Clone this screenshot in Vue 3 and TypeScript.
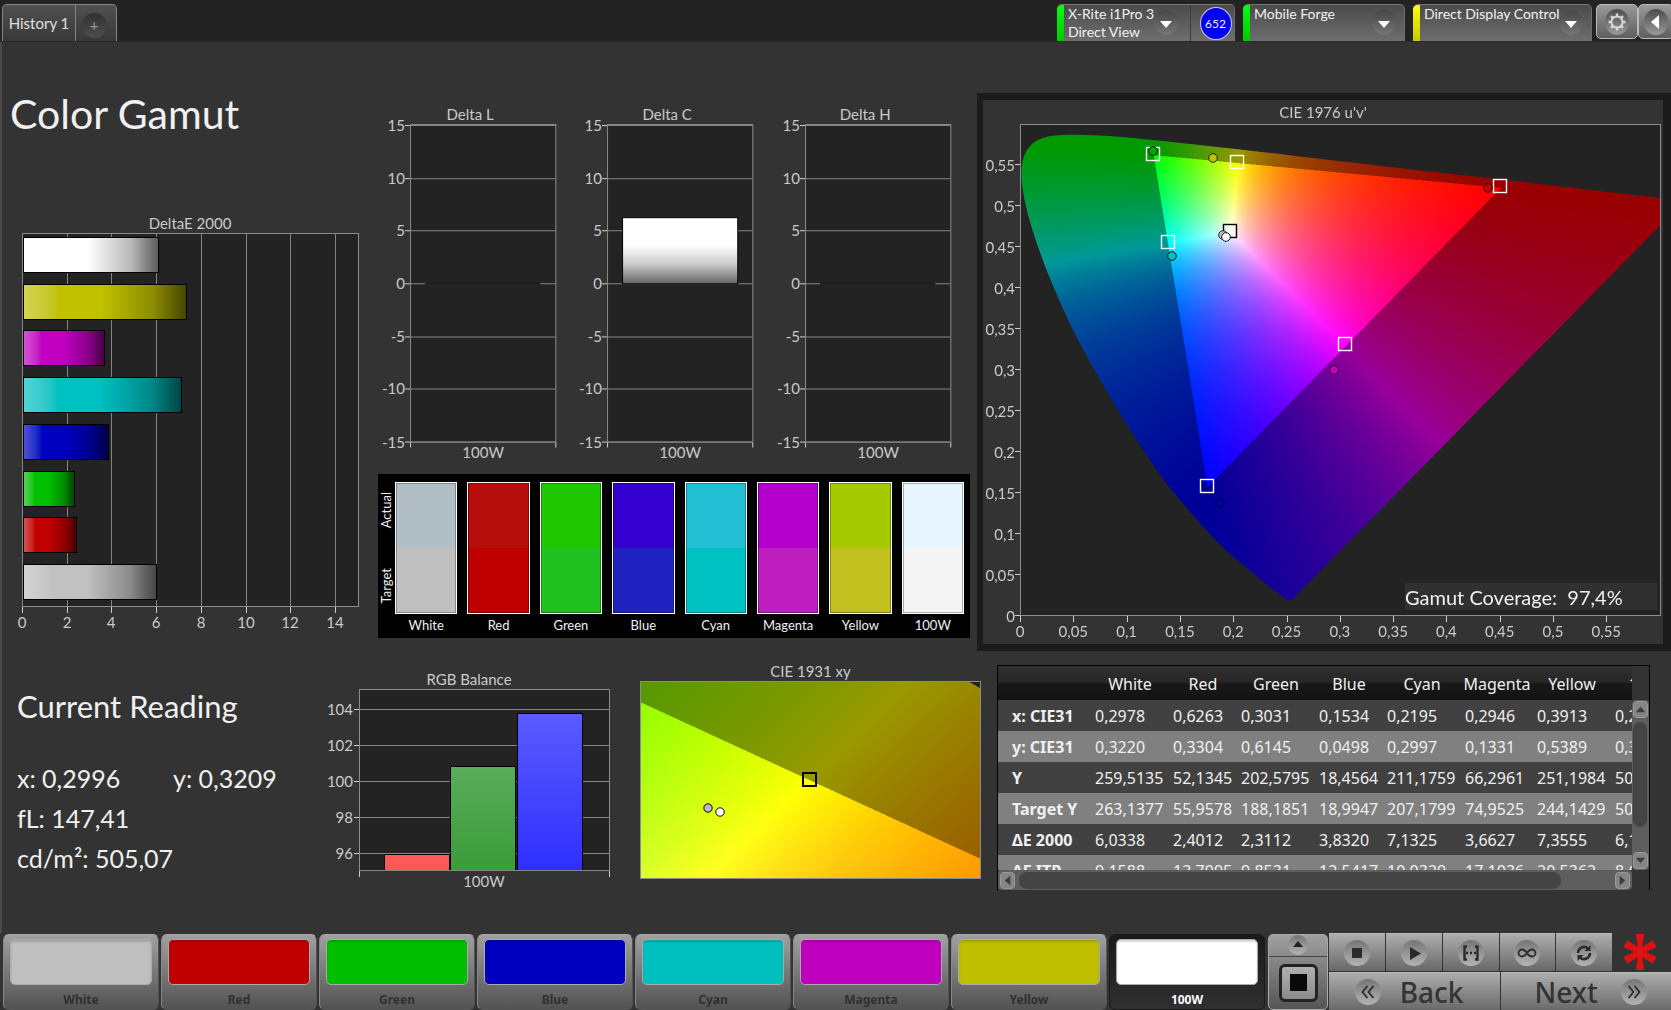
<script setup lang="ts">
import { onMounted, ref } from 'vue'

type Pt = [number, number]
interface Marker { x: number; y: number; fill?: string; stroke: string }

const hueBars = [
  { name: '100W', value: 6.1, color: '#ffffff' },
  { name: 'Yellow', value: 7.3555, color: '#c1c100' },
  { name: 'Magenta', value: 3.6627, color: '#c100c1' },
  { name: 'Cyan', value: 7.1325, color: '#00c1c1' },
  { name: 'Blue', value: 3.832, color: '#0000c1' },
  { name: 'Green', value: 2.3112, color: '#00c100' },
  { name: 'Red', value: 2.4012, color: '#c10000' },
  { name: 'White', value: 6, color: '#c1c1c1' },
]
const deX = (v: number) => Math.round(22 + v * 22.35)
const deTicks = [0, 2, 4, 6, 8, 10, 12, 14]

const deltaCharts = [
  { title: 'Delta L', value: 0 },
  { title: 'Delta C', value: 6.3 },
  { title: 'Delta H', value: 0 },
]
const deltaTicks = [15, 10, 5, 0, -5, -10, -15]
const deltaY = (v: number) => Math.round(184 - v * 10.54)

const swatches = [
  { name: 'White', actual: '#b1bec5', target: '#bfbfbf' },
  { name: 'Red', actual: '#b50e0c', target: '#be0000' },
  { name: 'Green', actual: '#1fc700', target: '#22c122' },
  { name: 'Blue', actual: '#3300cf', target: '#2222c0' },
  { name: 'Cyan', actual: '#22bed3', target: '#00c1c1' },
  { name: 'Magenta', actual: '#b300cb', target: '#bf1fbf' },
  { name: 'Yellow', actual: '#a6ca00', target: '#c1c11f' },
  { name: '100W', actual: '#e8f7ff', target: '#f4f4f4' },
]

const balanceTicks = [104, 102, 100, 98, 96]
const balanceY = (v: number) => Math.round(131 - (v - 100) * 18.1)
const balanceBars = [
  { x: 52, top: 204, from: '#ff5b5b', to: '#ff5555' },
  { x: 118, top: 116, from: '#5aac5a', to: '#3a9c3a' },
  { x: 185, top: 63, from: '#5b5bff', to: '#2f2fff' },
]

const uTicks = [0, 0.05, 0.1, 0.15, 0.2, 0.25, 0.3, 0.35, 0.4, 0.45, 0.5, 0.55]
const comma = (v: number) => String(v).replace('.', ',')
const uX = (u: number) => 37 + u * 1066
const vY = (v: number) => 516 - v * 820

const uvTargets: Marker[] = [
  { x: 170, y: 54, stroke: '#fff' },
  { x: 254, y: 62, stroke: '#fff' },
  { x: 517, y: 86, stroke: '#fff' },
  { x: 185, y: 142, stroke: '#fff' },
  { x: 362, y: 244, stroke: '#fff' },
  { x: 224, y: 386, stroke: '#fff' },
  { x: 247, y: 131, stroke: '#000' },
]
const uvReadings: Marker[] = [
  { x: 170, y: 51, fill: '#00a800', stroke: '#002000' },
  { x: 230, y: 58, fill: '#c1c100', stroke: '#222' },
  { x: 505, y: 88, fill: '#c10000', stroke: '#300' },
  { x: 189, y: 156, fill: '#00c1c1', stroke: '#012' },
  { x: 351, y: 270, fill: '#c100c1', stroke: '#303' },
  { x: 237, y: 403, fill: '#0000a4', stroke: '#000030' },
  { x: 240, y: 135, fill: '#c1c1c1', stroke: '#222' },
  { x: 243, y: 137, fill: '#fff', stroke: '#111' },
]

// Spectral locus, CIE 1931 xy
const locus: Pt[] = [
  [0.1736, 0.0059], [0.1712, 0.0061], [0.1644, 0.0109], [0.1566, 0.0177], [0.144, 0.0297],
  [0.1241, 0.0578], [0.1096, 0.0868], [0.0913, 0.1327], [0.0687, 0.2007], [0.0454, 0.295],
  [0.0235, 0.4127], [0.0082, 0.5384], [0.0039, 0.6548], [0.0139, 0.7502], [0.0389, 0.812],
  [0.0743, 0.8338], [0.1142, 0.8262], [0.1547, 0.8059], [0.2296, 0.7543], [0.3016, 0.6923],
  [0.3731, 0.6245], [0.4441, 0.5547], [0.5125, 0.4866], [0.5752, 0.4242], [0.627, 0.3725],
  [0.6658, 0.334], [0.6915, 0.3083], [0.719, 0.2809], [0.7347, 0.2653],
]

// Full brightness inside the Rec.709 triangle, dimmed outside it
function chromaticityColor(x: number, y: number): number[] {
  const X = x / y
  const Z = (1 - x - y) / y
  const rgb = [
    3.2406 * X - 1.5372 - 0.4986 * Z,
    -0.9689 * X + 1.8758 + 0.0415 * Z,
    0.0557 * X - 0.204 + 1.057 * Z,
  ]
  const inside = Math.min(...rgb) >= -0.0005
  const max = Math.max(...rgb)
  const level = inside ? 255 : 153
  return rgb.map((c) => (Math.max(0, c) / max) * level)
}

const samples: Pt[] = [[-0.25, -0.25], [0.25, -0.25], [-0.25, 0.25], [0.25, 0.25]]

function paintDiagram(
  canvas: HTMLCanvasElement,
  plot: { x: number; y: number; w: number; h: number },
  toXy: (px: number, py: number) => Pt,
  fromXy: (p: Pt) => Pt,
) {
  const ctx = canvas.getContext('2d')
  const layer = document.createElement('canvas')
  layer.width = plot.w
  layer.height = plot.h
  const layerCtx = layer.getContext('2d')
  if (!ctx || !layerCtx) return
  const img = layerCtx.createImageData(plot.w, plot.h)
  for (let j = 0; j < plot.h; j++) {
    for (let i = 0; i < plot.w; i++) {
      const k = (j * plot.w + i) * 4
      const sum = [0, 0, 0]
      for (const [dx, dy] of samples) {
        const [x, y] = toXy(plot.x + i + dx, plot.y + j + dy)
        const c = chromaticityColor(x, Math.max(y, 0.0001))
        for (let n = 0; n < 3; n++) sum[n] += c[n] / 4
      }
      img.data[k] = sum[0]
      img.data[k + 1] = sum[1]
      img.data[k + 2] = sum[2]
      img.data[k + 3] = 255
    }
  }
  layerCtx.putImageData(img, 0, 0)

  ctx.fillStyle = '#232323'
  ctx.fillRect(plot.x, plot.y, plot.w, plot.h)
  const p = locus.map(fromXy)
  ctx.save()
  ctx.beginPath()
  ctx.moveTo(p[0][0], p[0][1])
  for (let i = 0; i < p.length - 1; i++) {
    const a = p[Math.max(0, i - 1)]
    const b = p[i]
    const c = p[i + 1]
    const d = p[Math.min(p.length - 1, i + 2)]
    ctx.bezierCurveTo(
      b[0] + (c[0] - a[0]) / 6, b[1] + (c[1] - a[1]) / 6,
      c[0] - (d[0] - b[0]) / 6, c[1] - (d[1] - b[1]) / 6,
      c[0], c[1],
    )
  }
  ctx.closePath()
  ctx.clip()
  ctx.drawImage(layer, plot.x, plot.y)
  ctx.restore()
}

const uvCanvas = ref<HTMLCanvasElement | null>(null)
const xyCanvas = ref<HTMLCanvasElement | null>(null)

onMounted(() => {
  if (uvCanvas.value) {
    paintDiagram(
      uvCanvas.value,
      { x: 37, y: 24, w: 640, h: 492 },
      (px, py) => {
        const u = (px - 37) / 1066
        const v = (516 - py) / 820
        const d = 6 * u - 16 * v + 12
        return [(9 * u) / d, (4 * v) / d]
      },
      ([x, y]) => {
        const d = -2 * x + 12 * y + 3
        return [uX((4 * x) / d), vY((9 * y) / d)]
      },
    )
  }
  if (xyCanvas.value) {
    paintDiagram(
      xyCanvas.value,
      { x: 0, y: 0, w: 341, h: 198 },
      (px, py) => [0.4193 + (px - 169) / 4434, 0.5053 - (py - 99) / 2570],
      ([x, y]) => [169 + (x - 0.4193) * 4434, 99 - (y - 0.5053) * 2570],
    )
  }
})

const columns = ['White', 'Red', 'Green', 'Blue', 'Cyan', 'Magenta', 'Yellow', '100W']
const rows = [
  { name: 'x: CIE31', cells: ['0,2978', '0,6263', '0,3031', '0,1534', '0,2195', '0,2946', '0,3913', '0,2996'] },
  { name: 'y: CIE31', cells: ['0,3220', '0,3304', '0,6145', '0,0498', '0,2997', '0,1331', '0,5389', '0,3209'] },
  { name: 'Y', cells: ['259,5135', '52,1345', '202,5795', '18,4564', '211,1759', '66,2961', '251,1984', '505,0700'] },
  { name: 'Target Y', cells: ['263,1377', '55,9578', '188,1851', '18,9947', '207,1799', '74,9525', '244,1429', '505,0700'] },
  { name: 'ΔE 2000', cells: ['6,0338', '2,4012', '2,3112', '3,8320', '7,1325', '3,6627', '7,3555', '6,1000'] },
  { name: 'ΔE ITP', cells: ['9,1588', '13,7995', '9,8531', '12,5417', '10,0329', '17,1036', '20,5362', '8,6000'] },
]

const patterns = [
  { name: 'White', color: '#bfbfbf' },
  { name: 'Red', color: '#bf0000' },
  { name: 'Green', color: '#00bf00' },
  { name: 'Blue', color: '#0000bf' },
  { name: 'Cyan', color: '#00bfbf' },
  { name: 'Magenta', color: '#bf00bf' },
  { name: 'Yellow', color: '#bfbf00' },
  { name: '100W', color: '#ffffff' },
]
const selected = ref('100W')
</script>

<template>
  <div class="app">
    <header class="topbar">
      <nav class="tabs" aria-label="History">
        <button type="button" class="tab">History 1</button>
        <button type="button" class="tab tab-add" aria-label="Add history"><span class="round">+</span></button>
      </nav>
      <div class="devices">
        <div class="device">
          <i class="stripe green"></i>
          <label class="device-text meter">
            <select aria-label="Meter"><option>X-Rite i1Pro 3</option></select>
            <span>Direct View</span>
          </label>
          <span class="round chevron"><svg viewBox="0 0 24 26"><path d="M6 11h12l-6 7z" fill="#fff" /></svg></span>
          <span class="count-cell"><span class="count">652</span></span>
        </div>
        <div class="device">
          <i class="stripe green"></i>
          <label class="device-text source"><select aria-label="Source"><option>Mobile Forge</option></select></label>
          <span class="round chevron"><svg viewBox="0 0 24 26"><path d="M6 11h12l-6 7z" fill="#fff" /></svg></span>
        </div>
        <div class="device">
          <i class="stripe yellow"></i>
          <label class="device-text display"><select aria-label="Display"><option>Direct Display Control</option></select></label>
          <span class="round chevron"><svg viewBox="0 0 24 26"><path d="M6 11h12l-6 7z" fill="#fff" /></svg></span>
        </div>
        <div class="corner">
          <button type="button" class="corner-btn" aria-label="Settings">
            <svg viewBox="0 0 26 26">
              <ellipse cx="13" cy="13" rx="12" ry="13" fill="url(#knob)" />
              <g stroke="#d8d8d8" fill="none">
                <circle cx="13" cy="13" r="5.6" stroke-width="2" />
                <path stroke-width="2.4" d="M13 4.5v2.6M13 18.9v2.6M4.5 13h2.6M18.9 13h2.6M7 7l1.8 1.8M17.2 17.2L19 19M19 7l-1.8 1.8M8.8 17.2L7 19" />
              </g>
            </svg>
          </button>
          <button type="button" class="corner-btn" aria-label="Collapse">
            <svg viewBox="0 0 26 26">
              <ellipse cx="13" cy="13" rx="12" ry="13" fill="url(#knob)" />
              <path d="M16 6v14l-8-7z" fill="#fff" />
            </svg>
          </button>
        </div>
      </div>
      <svg class="defs" width="0" height="0" aria-hidden="true">
        <defs>
          <linearGradient id="knob" x1="0" y1="0" x2="0" y2="1">
            <stop offset="0" stop-color="#4c4c4c" /><stop offset="1" stop-color="#9a9a9a" />
          </linearGradient>
          <linearGradient id="knobLight" x1="0" y1="0" x2="0" y2="1">
            <stop offset="0" stop-color="#757575" /><stop offset="1" stop-color="#b4b4b4" />
          </linearGradient>
        </defs>
      </svg>
    </header>

    <main>
      <section class="upper">
        <div class="col-left">
          <h1>Color Gamut</h1>
          <svg class="chart" viewBox="2 0 376 430" role="img" aria-label="DeltaE 2000">
            <defs>
              <linearGradient v-for="b in hueBars" :id="'de' + b.name" :key="b.name">
                <stop offset="0" :stop-color="`color-mix(in srgb, ${b.color} 68%, white)`" />
                <stop offset="0.22" :stop-color="b.color" />
                <stop offset="0.48" :stop-color="b.color" />
                <stop offset="0.8" :stop-color="`color-mix(in srgb, ${b.color} 72%, black)`" />
                <stop offset="1" :stop-color="`color-mix(in srgb, ${b.color} 36%, black)`" />
              </linearGradient>
            </defs>
            <text x="190" y="19" class="mid">DeltaE 2000</text>
            <rect x="22.5" y="23.5" width="336" height="373" class="plot" />
            <g v-for="t in deTicks" :key="t">
              <path :d="`M${deX(t) + 0.5} 23V396`" class="grid" />
              <path :d="`M${deX(t) + 0.5} 397v6`" class="tick" />
              <text :x="deX(t)" y="418" class="mid">{{ t }}</text>
            </g>
            <rect
              v-for="(b, i) in hueBars" :key="b.name" x="23.5" :y="27.5 + Math.round(i * 46.7)"
              :width="deX(b.value) - 23" height="35" :fill="`url(#de${b.name})`" stroke="#000"
            />
          </svg>
        </div>

        <div class="col-mid">
          <div class="deltas">
            <svg v-for="c in deltaCharts" :key="c.title" class="chart" viewBox="0 0 197 373" role="img" :aria-label="c.title">
              <defs>
                <linearGradient id="white-bar" x1="0" y1="0" x2="0" y2="1">
                  <stop offset="0.42" stop-color="#fff" /><stop offset="0.7" stop-color="#ccc" /><stop offset="1" stop-color="#666" />
                </linearGradient>
              </defs>
              <text x="92" y="20" class="mid">{{ c.title }}</text>
              <rect x="32.5" y="24.5" width="145" height="317" class="plot" />
              <g v-for="t in deltaTicks" :key="t">
                <path :d="`M32 ${deltaY(t) - 0.5}h145`" class="grid" />
                <path :d="`M27 ${deltaY(t) - 0.5}h5`" class="tick" />
                <text x="27" :y="deltaY(t) + 5" class="end">{{ t }}</text>
              </g>
              <path d="M32.5 342v5M177.5 342v5" class="tick" />
              <rect
                v-if="c.value" x="47.5" :y="deltaY(c.value) - 0.5" width="115" :height="184 - deltaY(c.value)"
                fill="url(#white-bar)" stroke="#000"
              />
              <path v-else d="M47 183.5h115" stroke="#1b1b1b" stroke-width="2" />
              <text x="105" y="357" class="mid">100W</text>
            </svg>
          </div>
          <div class="swatch-panel">
            <div class="side"><span>Actual</span><span>Target</span></div>
            <div class="swatches">
              <figure v-for="s in swatches" :key="s.name">
                <div class="swatch">
                  <i :style="{ background: s.actual }"></i>
                  <i :style="{ background: s.target }"></i>
                </div>
                <figcaption>{{ s.name }}</figcaption>
              </figure>
            </div>
          </div>
        </div>

        <div class="gamut-panel">
          <div class="stack">
            <canvas ref="uvCanvas" width="680" height="544"></canvas>
            <svg class="chart" viewBox="0 0 680 544" role="img" aria-label="CIE 1976 u'v'">
              <text x="340" y="18" class="mid">CIE 1976 u'v'</text>
              <rect x="37.5" y="24.5" width="640" height="491" class="frame" />
              <g v-for="t in uTicks" :key="t">
                <path :d="`M${Math.round(uX(t)) + 0.5} 516v6`" class="tick" />
                <text :x="uX(t)" y="537" class="mid">{{ comma(t) }}</text>
                <path :d="`M32 ${Math.round(vY(t)) - 0.5}h5`" class="tick" />
                <text x="32" :y="Math.round(vY(t)) + 6" class="end">{{ comma(t) }}</text>
              </g>
              <rect v-for="(m, i) in uvTargets" :key="'t' + i" :x="m.x - 6.5" :y="m.y - 6.5" width="13" height="13" fill="none" :stroke="m.stroke" stroke-width="1.4" />
              <circle v-for="(m, i) in uvReadings" :key="'r' + i" :cx="m.x" :cy="m.y" r="4.3" :fill="m.fill" :stroke="m.stroke" />
              <rect x="422" y="483" width="252" height="27" fill="#303030" />
              <text x="422" y="505" class="coverage">Gamut Coverage:&nbsp; 97,4%</text>
            </svg>
          </div>
        </div>
      </section>

      <section class="lower">
        <div class="reading">
          <h2>Current Reading</h2>
          <p><span class="first">x: 0,2996</span><span>y: 0,3209</span></p>
          <p>fL: 147,41</p>
          <p>cd/m²: 505,07</p>
        </div>

        <svg class="chart" viewBox="0 0 292 240" role="img" aria-label="RGB Balance">
          <defs>
            <linearGradient v-for="(b, i) in balanceBars" :id="'rgb' + i" :key="i" x1="0" y1="0" x2="0" y2="1">
              <stop offset="0" :stop-color="b.from" /><stop offset="1" :stop-color="b.to" />
            </linearGradient>
          </defs>
          <text x="137" y="34" class="mid">RGB Balance</text>
          <rect x="27.5" y="38.5" width="250" height="181" class="plot" />
          <g v-for="t in balanceTicks" :key="t">
            <path :d="`M27 ${balanceY(t) - 0.5}h250`" class="grid" />
            <path :d="`M22 ${balanceY(t) - 0.5}h5`" class="tick" />
            <text x="21" :y="balanceY(t) + 5" class="end">{{ t }}</text>
          </g>
          <rect v-for="(b, i) in balanceBars" :key="i" :x="b.x + 0.5" :y="b.top - 0.5" width="65" :height="220 - b.top" :fill="`url(#rgb${i})`" stroke="#000" />
          <path d="M27 219.5h251" class="edge" />
          <path d="M27.5 220v6M277.5 220v6" class="tick" />
          <text x="152" y="236" class="mid">100W</text>
        </svg>

        <figure class="xy">
          <figcaption>CIE 1931 xy</figcaption>
          <div class="stack">
            <canvas ref="xyCanvas" width="341" height="198"></canvas>
            <svg class="chart" viewBox="0 0 341 198" role="img" aria-label="CIE 1931 xy">
              <rect x="0.5" y="0.5" width="340" height="197" class="frame" />
              <rect x="163" y="92" width="13" height="13" fill="none" stroke="#000" stroke-width="2" />
              <circle cx="68" cy="127" r="4.2" fill="#bbb" stroke="#000" />
              <circle cx="80" cy="131" r="4.2" fill="#fff" stroke="#000" />
            </svg>
          </div>
        </figure>

        <div class="grid-box">
          <div class="grid-view">
            <table>
              <colgroup>
                <col class="c-name"><col class="c-w"><col class="c-n"><col class="c-w"><col class="c-n">
                <col class="c-w"><col class="c-m"><col class="c-w"><col class="c-w">
              </colgroup>
              <thead>
                <tr><th></th><th v-for="c in columns" :key="c" scope="col">{{ c }}</th></tr>
              </thead>
              <tbody>
                <tr v-for="r in rows" :key="r.name">
                  <th scope="row">{{ r.name }}</th>
                  <td v-for="(v, i) in r.cells" :key="i">{{ v }}</td>
                </tr>
              </tbody>
            </table>
          </div>
          <div class="vbar">
            <button type="button" aria-label="Scroll up"><svg viewBox="0 0 14 16"><path d="M2 11h10L7 5z" /></svg></button>
            <i class="vthumb"></i>
            <button type="button" aria-label="Scroll down"><svg viewBox="0 0 14 16"><path d="M2 5h10l-5 6z" /></svg></button>
          </div>
          <div class="hbar">
            <button type="button" aria-label="Scroll left"><svg viewBox="0 0 14 16"><path d="M10 3v10L4 8z" /></svg></button>
            <i class="hthumb"></i>
            <button type="button" aria-label="Scroll right"><svg viewBox="0 0 14 16"><path d="M4 3v10l6-5z" /></svg></button>
          </div>
        </div>
      </section>
    </main>

    <footer>
      <div class="patterns">
        <button v-for="p in patterns" :key="p.name" type="button" class="pattern" :class="{ on: selected === p.name }" @click="selected = p.name">
          <i :style="{ background: p.color }"></i>
          <span>{{ p.name }}</span>
        </button>
      </div>
      <div class="window-ctl">
        <button type="button" class="up" aria-label="Expand">
          <svg width="20" height="20" viewBox="0 0 20 20"><circle cx="10" cy="10" r="10" fill="url(#knobLight)" /><path d="M5 12h10l-5-6z" fill="#222" /></svg>
        </button>
        <button type="button" class="full" aria-label="Pattern window"><i></i></button>
      </div>
      <div class="transport">
        <div class="row">
          <button type="button" aria-label="Stop"><svg viewBox="0 0 26 26"><circle cx="13" cy="13" r="13" fill="url(#knobLight)" /><path d="M8 8h10v10H8z" fill="#2b2b2b" /></svg></button>
          <button type="button" aria-label="Play"><svg viewBox="0 0 26 26"><circle cx="13" cy="13" r="13" fill="url(#knobLight)" /><path d="M9 7v13l11-6.500z" fill="#2b2b2b" /></svg></button>
          <button type="button" aria-label="Read series"><svg viewBox="0 0 26 26"><circle cx="13" cy="13" r="13" fill="url(#knobLight)" /><path d="M9 6.500H6.500v13H9M17 6.500h2.500v13H17M8 13h2M12 13h2M16 13h2" fill="none" stroke="#2b2b2b" stroke-width="2.400" /></svg></button>
          <button type="button" aria-label="Continuous"><svg viewBox="0 0 26 26"><circle cx="13" cy="13" r="13" fill="url(#knobLight)" /><path d="M13 13c-2-3-3.500-3.500-5-3.500a3.500 3.500 0 0 0 0 7c1.500 0 3-.5 5-3.500s3.500-3.500 5-3.500a3.500 3.500 0 0 1 0 7c-1.500 0-3-.5-5-3.500z" fill="none" stroke="#2b2b2b" stroke-width="1.800" /></svg></button>
          <button type="button" aria-label="Refresh"><svg viewBox="0 0 26 26"><circle cx="13" cy="13" r="13" fill="url(#knobLight)" /><path d="M7 13a6 6 0 0 1 10-4.500M19 13a6 6 0 0 1-10 4.500" fill="none" stroke="#2b2b2b" stroke-width="2.500" /><path d="M19.500 5v6h-6zM6.500 21v-6h6z" fill="#2b2b2b" /></svg></button>
          <span class="star">
            <svg width="34" height="38" viewBox="0 0 34 38">
              <path d="M13 1h8l-1.500 13 10-6.500 4 6.500-11 5 11 5-4 6.500-10-6.500L21 37h-8l1.500-13-10 6.500-4-6.500 11-5-11-5 4-6.500 10 6.500z" fill="#e01010" />
            </svg>
          </span>
        </div>
        <div class="row steps">
          <button type="button" class="step">
            <svg viewBox="0 0 26 26"><circle cx="13" cy="13" r="13" fill="url(#knobLight)" /><path d="M12.500 7l-5 6 5 6M18.500 7l-5 6 5 6" fill="none" stroke="#2b2b2b" stroke-width="1.800" /></svg>
            <span>Back</span>
          </button>
          <button type="button" class="step">
            <span>Next</span>
            <svg viewBox="0 0 26 26"><circle cx="13" cy="13" r="13" fill="url(#knobLight)" /><path d="M7.500 7l5 6-5 6M13.500 7l5 6-5 6" fill="none" stroke="#2b2b2b" stroke-width="1.800" /></svg>
          </button>
        </div>
      </div>
    </footer>
  </div>
</template>

<style>
body {
  background: #333;
}
</style>

<style scoped>
* {
  box-sizing: border-box;
}
.app {
  display: flex;
  flex-direction: column;
  min-height: 100vh;
  overflow: hidden;
  background: #333;
  color: #f0f0f0;
  font-family: Lato, "Noto Sans", sans-serif;
  font-size: 15px;
}
button,
select {
  margin: 0;
  padding: 0;
  border: 0;
  background: none;
  color: inherit;
  font: inherit;
}
figure,
h1,
h2,
p {
  margin: 0;
}
i {
  display: block;
}
.defs {
  position: absolute;
}

/* top bar */
.topbar {
  display: flex;
  justify-content: space-between;
  height: 42px;
  padding-top: 4px;
  background: #232323;
  border-bottom: 1px solid #2a2a2a;
}
.tabs {
  display: flex;
  margin-left: 2px;
  border: 1px solid #858585;
  border-bottom: 0;
  border-radius: 5px 5px 0 0;
  background: linear-gradient(#505050, #383838);
}
.tab {
  width: 72px;
  color: #e0e0e0;
}
.tab-add {
  display: flex;
  align-items: center;
  justify-content: center;
  width: 41px;
  padding-top: 4px;
  border-left: 1px solid #858585;
}
.round {
  display: flex;
  align-items: center;
  justify-content: center;
  width: 25px;
  height: 25px;
  border-radius: 50%;
  background: linear-gradient(#303030, #4e4e4e);
  color: #999;
}
.tab-add .round {
  margin-right: 4px;
}
.devices {
  display: flex;
  gap: 8px;
}
.device {
  display: flex;
  overflow: hidden;
  border-top: 1px solid #777;
  border-right: 1px solid #6c6c6c;
  border-radius: 5px 5px 0 0;
  background: linear-gradient(#4b4b4b, #6e6e6e);
}
.stripe {
  width: 7px;
}
.stripe.green {
  background: linear-gradient(#00ff12, #00c800);
}
.stripe.yellow {
  background: linear-gradient(#ffff00, #c8c800);
}
.device-text {
  display: flex;
  flex-direction: column;
  padding-left: 4px;
  color: #f2f2f2;
  font-size: 14px;
  line-height: 19px;
}
.device-text select {
  width: 100%;
  height: 17px;
  appearance: none;
  line-height: 17px;
}
.meter {
  width: 90px;
}
.source {
  width: 122px;
}
.display {
  width: 139px;
}
.chevron {
  flex: none;
  width: 24px;
  margin: 5px 8px 0 0;
  background: linear-gradient(#464646, #777);
}
.count-cell {
  display: flex;
  align-items: center;
  justify-content: center;
  width: 44px;
  margin-left: 4px;
  padding-left: 6px;
  border-left: 1px solid #3c3c3c;
}
.count {
  display: flex;
  align-items: center;
  justify-content: center;
  width: 32px;
  height: 33px;
  border: 1px solid #ccd;
  border-radius: 50%;
  background: #0000f5;
  font-size: 12px;
}
.corner {
  display: flex;
  width: 75px;
  margin-left: -4px;
  overflow: hidden;
}
.corner-btn {
  display: flex;
  align-items: center;
  justify-content: center;
  flex: none;
  width: 42px;
  height: 35px;
  border: 1px solid #bbb;
  border-radius: 5px;
  background: linear-gradient(#999, #5e5e5e);
}
.corner-btn + .corner-btn {
  width: 36px;
}
.corner-btn svg {
  width: 26px;
  height: 26px;
}

/* layout */
main {
  flex: 1;
  border-left: 2px solid #4a4a4a;
}
.upper {
  display: grid;
  grid-template-columns: minmax(0, 376fr) minmax(0, 599fr) minmax(0, 694fr);
}
.lower {
  display: grid;
  grid-template-columns: minmax(0, 330fr) minmax(0, 292fr) minmax(0, 373fr) minmax(0, 653fr);
  align-items: start;
  padding-right: 21px;
}
.chart {
  display: block;
  width: 100%;
  height: auto;
  overflow: visible;
}
.chart text {
  fill: #cacaca;
  font-size: 15px;
}
.chart .mid {
  text-anchor: middle;
}
.chart .end {
  text-anchor: end;
}
.plot {
  fill: #232323;
  stroke: #8c8c8c;
}
.frame {
  fill: none;
  stroke: #8c8c8c;
}
.grid,
.edge {
  fill: none;
  stroke: #858585;
}
.tick {
  stroke: #d0d0d0;
}
h1 {
  padding: 48px 0 0 8px;
  font-size: 41px;
  font-weight: 400;
  line-height: 48px;
}
.col-left .chart {
  margin-top: 72px;
}
.deltas {
  display: grid;
  grid-template-columns: repeat(3, 1fr);
  margin: 58px 7px 0 0;
}
.swatch-panel {
  display: flex;
  margin-right: 7px;
  padding: 8px 6px 2px 2px;
  background: #000;
}
.swatches {
  display: grid;
  flex: 1;
  grid-template-columns: repeat(8, minmax(0, 1fr));
  column-gap: 10px;
}
.side {
  display: flex;
  flex-direction: column;
  justify-content: space-between;
  align-items: flex-start;
  width: 15px;
  height: 132px;
  padding: 10px 0;
}
.side span {
  writing-mode: vertical-rl;
  transform: rotate(180deg);
  font-size: 13px;
  line-height: 13px;
}
.swatch-panel figure {
  text-align: center;
}
.swatch {
  display: flex;
  flex-direction: column;
  height: 132px;
  border: 1px solid #fff;
  outline: 1px solid rgb(0 0 0 / 30%);
  outline-offset: -2px;
}
.swatch i {
  flex: 1;
}
figcaption {
  font-size: 13px;
  line-height: 22px;
}
.gamut-panel {
  align-self: start;
  margin-top: 51px;
  border: 7px solid #1b1b1b;
  border-width: 7px 8px 7px 6px;
}
.stack {
  display: grid;
}
.stack > * {
  grid-area: 1 / 1;
  width: 100%;
  height: auto;
}
.chart .coverage {
  fill: #f0f0f0;
  font-size: 20px;
}

/* readings */
.reading {
  padding: 35px 0 0 15px;
  font-size: 25px;
}
.reading h2 {
  margin-bottom: 32px;
  font-size: 31px;
  font-weight: 400;
  line-height: 40px;
}
.reading p {
  display: flex;
  line-height: 40px;
}
.first {
  width: 156px;
}
.xy {
  padding: 10px 16px 0 16px;
}
.xy figcaption {
  color: #cacaca;
  font-size: 15px;
  line-height: 20px;
  text-align: center;
}

/* data grid */
.grid-box {
  display: grid;
  grid-template-columns: minmax(0, 1fr) 17px;
  grid-template-rows: 204px 20px;
  margin-top: 14px;
  border: 1px solid #000;
  border-bottom: 0;
  font-family: "Noto Sans", sans-serif;
}
.grid-view {
  overflow: hidden;
}
table {
  table-layout: fixed;
  width: 689px;
  border-collapse: collapse;
  font-size: 16px;
}
.c-name {
  width: 93px;
}
.c-w {
  width: 78px;
}
.c-n {
  width: 68px;
}
.c-m {
  width: 72px;
}
thead tr {
  height: 34px;
  background: linear-gradient(#303030 0%, #262626 48%, #181818 52%, #131313 100%);
}
tbody tr {
  height: 31px;
  background: #414141;
}
tbody tr:nth-child(even) {
  background: #808080;
}
th,
td {
  padding: 0 4px;
  color: #f0f0f0;
  line-height: 24px;
  text-align: left;
  white-space: nowrap;
}
thead th {
  padding: 2px 0 0;
  font-weight: 400;
  text-align: center;
}
tbody th {
  padding-left: 14px;
}
.vbar {
  display: flex;
  flex-direction: column;
  gap: 4px;
  margin-top: 34px;
  padding: 1px;
  border-radius: 4px;
  background: #5e5e5e;
}
.vbar button,
.hbar button {
  flex: none;
  width: 15px;
  height: 17px;
  border: 1px solid #9a9a9a;
  border-radius: 4px;
  background: #858585;
}
.vbar svg,
.hbar svg {
  display: block;
  width: 13px;
  height: 15px;
  fill: #3c3c3c;
}
.vthumb {
  width: 14px;
  height: 105px;
  margin-bottom: auto;
  border-radius: 7px;
  background: #444;
}
.hbar {
  display: flex;
  align-items: center;
  gap: 4px;
  padding: 0 2px;
  border-radius: 4px;
  background: #5e5e5e;
}
.hthumb {
  width: 86%;
  height: 17px;
  margin-right: auto;
  border-radius: 8px;
  background: #444;
}

/* footer */
footer {
  display: flex;
  height: 77px;
  padding-left: 3px;
}
.patterns {
  display: grid;
  flex: 1262;
  grid-template-columns: repeat(8, minmax(0, 1fr));
  column-gap: 2px;
  padding-top: 1px;
}
.pattern {
  display: flex;
  flex-direction: column;
  padding: 4px 6px 0;
  border: 1px solid #999;
  border-color: #aaa #555 #555 #888;
  border-radius: 6px;
  background: linear-gradient(#a0a0a0, #525252);
  color: #303030;
  font-family: "Noto Sans", sans-serif;
  font-size: 12px;
  font-weight: 700;
  line-height: 14px;
}
.pattern i {
  width: 100%;
  height: 46px;
  margin-bottom: 8px;
  border: 1px solid #aaa;
  border-radius: 5px;
  box-shadow: inset 0 2px 2px rgb(0 0 0 / 15%);
}
.pattern span {
  width: 100%;
  text-align: center;
}
.pattern.on {
  border-color: #1a1a1a;
  background: linear-gradient(#1a1a1a, #303030);
  color: #fff;
}
.window-ctl {
  display: flex;
  flex-direction: column;
  width: 60px;
  margin: 1px 1px 0 3px;
  overflow: hidden;
  border: 1px solid #aaa;
  border-radius: 5px;
  background: linear-gradient(#a0a0a0, #555);
}
.up {
  height: 22px;
  border-bottom: 1px solid #444;
}
.up svg {
  display: block;
  margin: 0 auto;
}
.full {
  display: flex;
  align-items: center;
  justify-content: center;
  width: 39px;
  height: 39px;
  margin: 7px auto;
  border: 3px solid #222;
  border-radius: 6px;
  background: linear-gradient(#b0b0b0, #8a8a8a);
}
.full i {
  width: 17px;
  height: 17px;
  background: #0a0a0a;
}
.transport {
  display: flex;
  flex-direction: column;
  gap: 1px;
  flex: 342;
}
.row {
  display: grid;
  grid-template-columns: repeat(5, minmax(0, 56fr)) minmax(0, 58fr);
  column-gap: 1px;
  height: 38px;
}
.row.steps {
  grid-template-columns: repeat(2, minmax(0, 1fr));
}
.row button {
  display: flex;
  align-items: center;
  justify-content: center;
  background: linear-gradient(#adadad, #686868);
  border-top: 1px solid #b8b8b8;
}
.row svg {
  flex: none;
}
.row button svg {
  width: 26px;
  height: 26px;
}
.star {
  display: flex;
  align-items: center;
  justify-content: center;
  padding-right: 4px;
}
.row .step {
  justify-content: space-between;
  padding: 0 36px 0 26px;
  color: #333;
  font-family: "Noto Sans", sans-serif;
  font-size: 28px;
  font-weight: 500;
}
.row .step + .step {
  padding: 0 24px 0 34px;
}
</style>
